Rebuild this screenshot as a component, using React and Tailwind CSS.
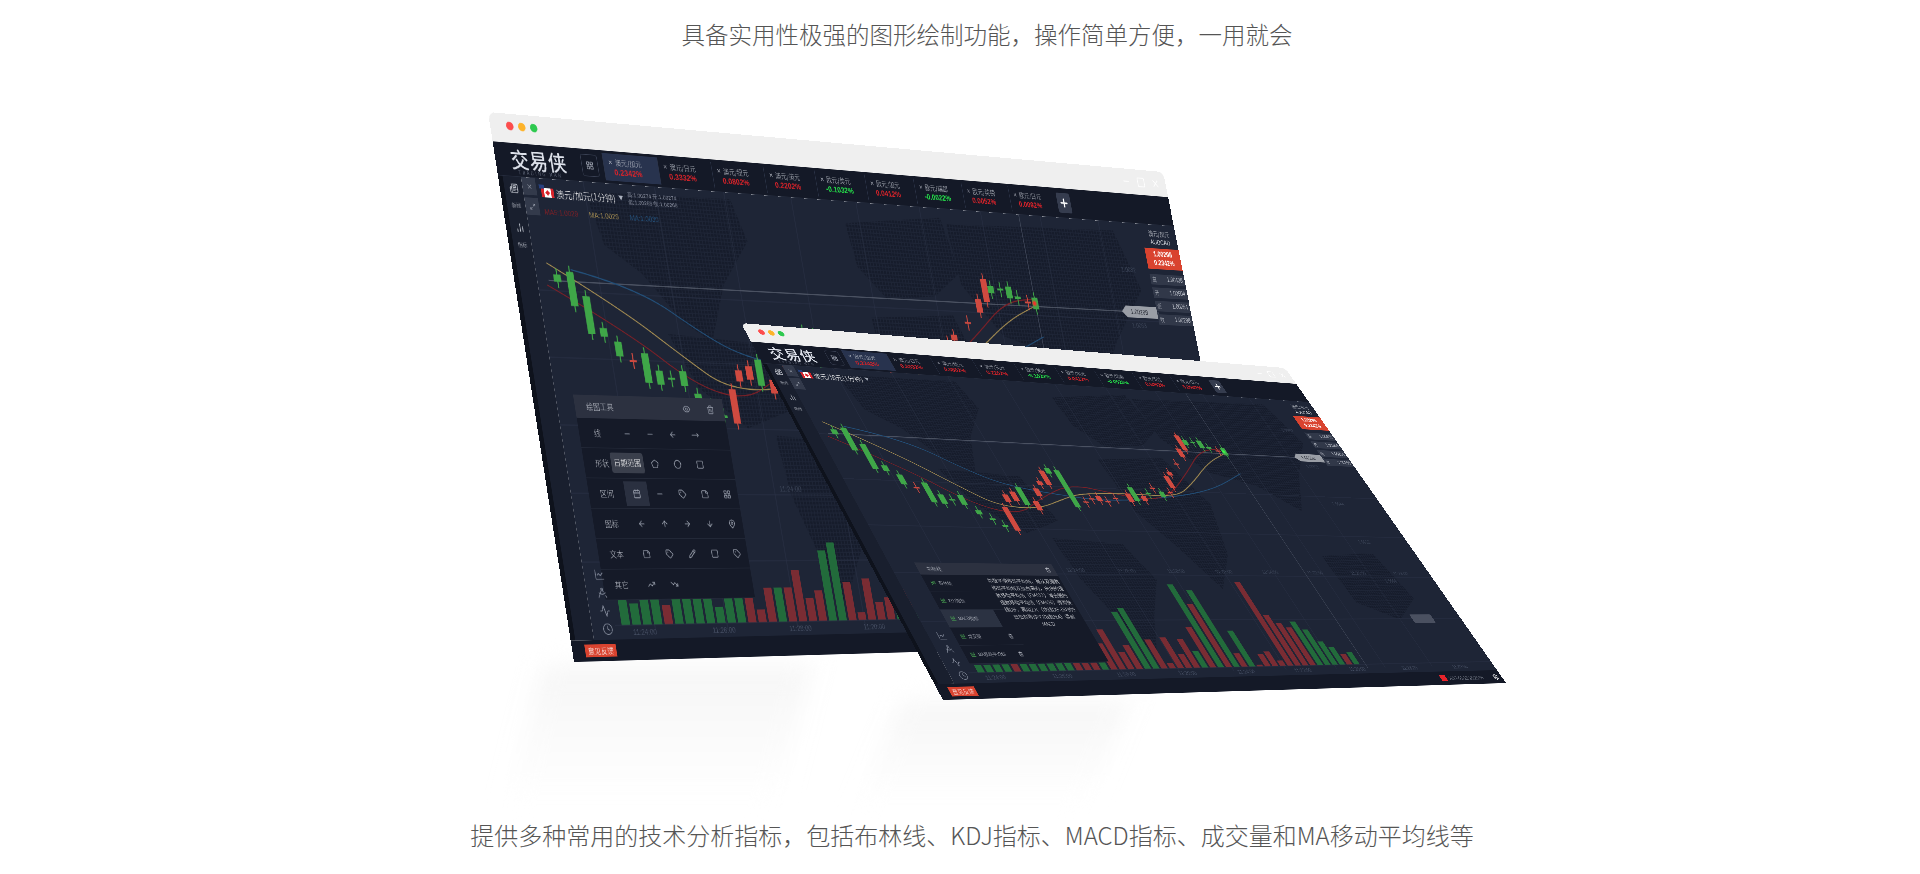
import { useMemo } from "react";
import {
  Activity, ArrowDown, ArrowLeft, ArrowRight, ArrowUp, Calendar, ChartCandlestick, ChartLine, ChartNoAxesColumn, Circle, Clock,
  DraftingCompass, Eye, LayoutGrid, MapPin, Maximize2, Minus, MoveRight, Newspaper, Pencil, Pentagon,
  Plus, Settings, Square, StickyNote, Tag, Trash2, TrendingDown, TrendingUp, X,
} from "lucide-react";

const W = 1366;
const H = 800;

// x, mid y, body length, colour
const CANDLES = [
  [76, 210, 11, "g"], [101, 225, 51, "g"], [125, 263, 56, "g"], [148, 288, 13, "g"], [172, 312, 22, "g"],
  [196, 329, 2, "r"], [220, 339, 44, "g"], [243, 353, 21, "g"], [265, 354, 3, "g"], [289, 353, 22, "g"],
  [312, 380, 9, "g"], [336, 395, 4, "g"], [357, 409, 4, "g"], [382, 393, 52, "r"], [401, 346, 17, "r"],
  [423, 341, 21, "r"], [444, 340, 40, "g"], [468, 361, 21, "r"], [488, 330, 18, "r"], [508, 308, 8, "r"],
  [530, 295, 34, "r"], [548, 278, 13, "g"], [570, 319, 86, "g"], [598, 349, 3, "r"], [618, 341, 3, "r"],
  [638, 340, 12, "r"], [657, 346, 2, "r"], [683, 338, 3, "r"], [722, 335, 20, "r"], [739, 326, 33, "g"],
  [761, 336, 12, "r"], [780, 323, 3, "g"], [801, 310, 3, "r"], [818, 324, 13, "g"], [843, 319, 3, "r"],
  [860, 293, 29, "r"], [876, 272, 9, "r"], [913, 247, 3, "r"], [946, 218, 22, "r"], [966, 192, 38, "r"],
  [980, 190, 12, "g"], [1002, 189, 3, "g"], [1021, 193, 19, "g"], [1039, 201, 4, "g"], [1061, 208, 3, "r"],
  [1078, 209, 19, "g"],
];

const MA_TAN = [[60, 188], [186, 250], [302, 324], [369, 364], [467, 368], [539, 345], [596, 329], [727, 325], [853, 329], [918, 297], [1007, 240], [1077, 213]];
const MA_RED = [[55, 221], [192, 285], [313, 364], [410, 383], [481, 346], [581, 308], [671, 323], [754, 339], [833, 329], [928, 267], [1007, 209], [1084, 201]];
const MA_BLUE = [[104, 196], [226, 218], [345, 286], [418, 316], [536, 334], [657, 346], [853, 329], [976, 306], [1083, 264]];

const VOL_A = [
  [39, "g"], [31, "g"], [39, "g"], [39, "g"], [28, "r"], [40, "g"], [40, "g"], [40, "g"], [40, "g"], [24, "g"],
  [41, "g"], [41, "g"], [39, "r"], [19, "r"], [51, "r"], [51, "g"], [51, "r"], [77, "r"], [35, "r"], [46, "r"],
  [106, "g"], [118, "g"], [58, "r"], [12, "r"], [63, "r"], [27, "r"], [34, "r"], [20, "g"], [50, "r"], [30, "g"],
  [60, "r"], [24, "r"],
];
const VOL_B = [
  [15, "g"], [15, "g"], [15, "g"], [15, "g"], [15, "r"], [15, "g"], [15, "g"], [15, "g"], [15, "g"], [15, "g"],
  [15, "g"], [15, "r"], [15, "r"], [15, "r"], [15, "g"], [54, "r"], [83, "r"], [36, "r"], [50, "r"], [119, "g"],
  [128, "g"], [61, "r"], [11, "r"], [65, "r"], [30, "r"], [61, "r"], [35, "g"], [86, "r"], [180, "g"], [137, "r"],
  [167, "g"], [29, "r"], [78, "g"], [4, "r"], [27, "r"], [32, "r"], [12, "r"], [187, "r"], [112, "r"], [94, "r"],
  [84, "r"], [97, "g"], [79, "g"], [52, "g"], [40, "g"], [23, "r"], [27, "g"],
];

const TABS = [
  ["澳元/加元", "0.2342", "r"], ["澳元/日元", "0.3332", "r"], ["澳元/纽元", "0.0802", "r"],
  ["澳元/英元", "0.2202", "r"], ["欧元/美元", "-0.1032", "g"], ["欧元/加元", "0.0412", "r"],
  ["欧元/瑞郎", "-0.0022", "g"], ["欧元/英镑", "0.0052", "r"], ["欧元/日元", "0.0092", "r"],
];

const LAND = [
  "M150 110 L420 105 L440 170 L380 240 L340 330 L290 300 L230 230 L170 190 Z",
  "M260 320 L440 330 L470 430 L380 460 L300 400 Z",
  "M430 470 L590 480 L620 560 L560 640 L510 725 L470 640 L440 560 Z",
  "M640 130 L840 110 L860 200 L800 240 L700 250 L650 200 Z",
  "M660 280 L830 270 L880 380 L840 500 L770 580 L720 480 L670 400 Z",
  "M850 120 L1220 110 L1260 210 L1180 300 L1120 390 L1040 330 L930 300 L860 220 Z",
  "M1090 500 L1240 490 L1270 600 L1190 650 L1100 610 Z",
];

// the candle x values were read a little wide, pull them in towards the first one
const fx = (x) => 76 + (x - 76) * 0.935;

// maps the flat window onto its four corners on the page
function quadMatrix(w, h, [p0, p1, p2, p3]) {
  const dx1 = p1[0] - p2[0];
  const dx2 = p3[0] - p2[0];
  const sx = p0[0] - p1[0] + p2[0] - p3[0];
  const dy1 = p1[1] - p2[1];
  const dy2 = p3[1] - p2[1];
  const sy = p0[1] - p1[1] + p2[1] - p3[1];
  const den = dx1 * dy2 - dx2 * dy1;
  const g = (sx * dy2 - dx2 * sy) / den;
  const k = (dx1 * sy - sx * dy1) / den;
  const a = p1[0] - p0[0] + g * p1[0];
  const b = p3[0] - p0[0] + k * p3[0];
  const d = p1[1] - p0[1] + g * p1[1];
  const e = p3[1] - p0[1] + k * p3[1];
  return `matrix3d(${a / w},${d / w},0,${g / w},${b / h},${e / h},0,${k / h},0,0,1,0,${p0[0]},${p0[1]},0,1)`;
}

function smooth(pts, dy) {
  let d = `M${fx(pts[0][0])} ${pts[0][1] + dy}`;
  for (let i = 1; i < pts.length - 1; i++) {
    const mx = (fx(pts[i][0]) + fx(pts[i + 1][0])) / 2;
    const my = (pts[i][1] + pts[i + 1][1]) / 2 + dy;
    d += ` Q${fx(pts[i][0])} ${pts[i][1] + dy} ${mx} ${my}`;
  }
  const last = pts[pts.length - 1];
  return `${d} L${fx(last[0])} ${last[1] + dy}`;
}

function Chart({ shift, volBase, sepY, vols, volStart, volStep, barW, glow, times, volTag }) {
  const lineY = 214 + shift;
  return (
    <svg viewBox="40 95 1326 675" preserveAspectRatio="none" className="absolute inset-0 h-full w-full">
      <defs>
        <pattern id={`dots${shift}`} width="6" height="6" patternUnits="userSpaceOnUse">
          <rect width="4.5" height="4.5" fill="#161c2b" />
        </pattern>
      </defs>
      {LAND.map((d, i) => (
        <path key={i} d={d} fill={`url(#dots${shift})`} />
      ))}
      {[150, 280, 410, 540, 670, 800, 930, 1060, 1190].map((x) => (
        <line key={x} x1={x} x2={x} y1="95" y2={volBase + 8} stroke="#2b3347" strokeWidth="1" />
      ))}
      {[-3, -2, -1, 0, 1].map((k) => (
        <line key={k} x1="40" x2="1366" y1={sepY + k * 99} y2={sepY + k * 99} stroke="#2b3347" strokeWidth="1" />
      ))}
      <line x1={fx(1078)} x2={fx(1078)} y1="95" y2={volBase + 8} stroke="#4a5163" strokeWidth="1.2" />
      <line x1="60" x2="1290" y1={lineY} y2={lineY} stroke="#5a6070" strokeWidth="1.6" />
      {[0, 1, 2, 3, 4].map((i) => (
        <text key={i} x="1222" y={146 + i * 95 + shift} fill="#3c4558" fontSize="11" fontFamily="Liberation Sans, sans-serif">
          {["1.0082", "1.0063", "1.0044", "1.0025", "1.0006"][i]}
        </text>
      ))}
      <path d={smooth(MA_BLUE, shift)} fill="none" stroke="#23507a" strokeWidth="1.8" />
      <path d={smooth(MA_RED, shift)} fill="none" stroke="#7d2027" strokeWidth="1.8" />
      <path d={smooth(MA_TAN, shift)} fill="none" stroke="#a58d52" strokeWidth="1.8" />
      {CANDLES.map(([x, y, len, c]) => {
        const col = c === "g" ? "#3fa648" : "#cf4a40";
        const wick = len / 2 + (len < 6 ? 11 : 9);
        return (
          <g key={x}>
            <line x1={fx(x)} x2={fx(x)} y1={y + shift - wick} y2={y + shift + wick} stroke={col} strokeWidth="2" />
            <rect x={fx(x) - 6.5} y={y + shift - len / 2} width="13" height={Math.max(len, 3)} fill={col} />
          </g>
        );
      })}
      <circle cx={fx(1076)} cy={209 + shift} r="4" fill={glow} className="blur-[1.5px]" />
      {times.map((t, i) => (
        <text key={t + i} x={420 + i * 120} y={sepY - 5} fill="#3c4558" fontSize="11" fontFamily="Liberation Sans, sans-serif">
          {t}
        </text>
      ))}
      {vols.map(([h, c], i) => (
        <rect
          key={i}
          x={volStart + i * volStep}
          y={volBase - h}
          width={barW}
          height={h}
          fill={c === "g" ? "#226b3b" : "#7a2c33"}
        />
      ))}
      <line x1="80" x2="1366" y1={volBase} y2={volBase} stroke="#2b3347" strokeWidth="1" />
      {times.map((t, i) => (
        <text key={t + i} x={110 + i * 142} y={volBase + 14} fill="#454e62" fontSize="11" fontFamily="Liberation Sans, sans-serif">
          {t}
        </text>
      ))}
      <polygon points={`1205,${lineY} 1216,${lineY - 10} 1286,${lineY - 10} 1286,${lineY + 10} 1216,${lineY + 10}`} fill="#9a9ea6" />
      <text x="1225" y={lineY + 4} fill="#20242e" fontSize="11" fontFamily="Liberation Sans, sans-serif">1.00298</text>
      {volTag && <rect x="1225" y={sepY + 89} width="60" height="20" rx="3" fill="#4a5060" />}
    </svg>
  );
}

function Flag() {
  return (
    <span className="relative mr-1 inline-flex h-[14px] w-[22px] items-center justify-center bg-white">
      <span className="absolute inset-y-0 left-0 w-[5px] bg-[#d8232a]" />
      <span className="absolute inset-y-0 right-0 w-[5px] bg-[#d8232a]" />
      <span className="h-[6px] w-[6px] rotate-45 bg-[#d8232a]" />
      <span className="absolute -top-[5px] -left-[3px] h-[6px] w-[9px] bg-[#26407e]" />
    </span>
  );
}

function Header() {
  return (
    <div className="flex h-[51px] items-center border-b border-[#242b3c] bg-[#141927] pl-[22px]">
      <div className="mt-[4px] flex w-[108px] flex-col items-center text-[#dde1ea]">
        <span className="text-[32px] leading-[34px] font-medium tracking-[1px]">交易侠</span>
        <span className="text-[7px] leading-[8px] tracking-[3px] text-[#7d8598]">TRADING MAN</span>
      </div>
      <div className="ml-[22px] flex h-[34px] w-[30px] items-center justify-center rounded-sm border border-[#3b4255]">
        <LayoutGrid size={14} className="text-[#aab0bd]" />
      </div>
      <div className="ml-[10px] flex">
        {TABS.map(([name, val, c], i) => (
          <div key={name} className={`flex h-[42px] w-[101px] flex-col justify-center border-l border-[#2b3347] pl-[8px] ${i === 0 ? "bg-[#28334e]" : ""}`}>
            <span className="flex items-center gap-1 text-[11px] leading-[15px] text-[#c3c7d0]">
              <X size={9} /> {name}
            </span>
            <span className={`pl-[9px] font-['Liberation_Sans',sans-serif] text-[13px] leading-[15px] font-bold ${c === "g" ? "text-[#25e04a]" : "text-[#d8232a]"}`}>
              {val}%
            </span>
          </div>
        ))}
      </div>
      <div className="ml-[4px] flex h-[34px] w-[30px] items-center justify-center rounded-sm bg-[#353c4e]">
        <Plus size={22} strokeWidth={3} className="text-white" />
      </div>
    </div>
  );
}

function RightPanel() {
  const rows = [["高", "1.00438"], ["开", "1.00504"], ["低", "1.00254"], ["收", "1.00298"]];
  return (
    <div className="absolute top-[8px] right-0 flex w-[80px] flex-col items-center text-[#d5d8de]">
      <span className="text-[11px] leading-[15px]">澳元/加元</span>
      <span className="font-['Liberation_Sans',sans-serif] text-[11px] leading-[15px]">AUDCAD</span>
      <div className="mt-[3px] flex h-[36px] w-full flex-col items-center justify-center bg-[#d9432f] font-['Liberation_Sans',sans-serif] text-[12px] leading-[15px] font-bold text-white">
        <span>1.00298</span>
        <span>0.2342%</span>
      </div>
      <div className="mt-[9px] flex w-full flex-col gap-[5px]">
        {rows.map(([k, v]) => (
          <div key={k} className="flex h-[18px] items-center justify-between bg-[#313849] pr-[5px] pl-[4px] text-[10px] text-[#c3c7d0]">
            <span>{k}</span>
            <span className="font-['Liberation_Sans',sans-serif]">{v}</span>
          </div>
        ))}
      </div>
    </div>
  );
}

function SubHeader({ info }) {
  return (
    <div className="absolute top-0 left-0 flex">
      <div className="flex flex-col gap-[4px]">
        <div className="flex h-[26px] w-[24px] items-center justify-center bg-[#333a4b] text-[#9aa0ad]">
          <X size={11} />
        </div>
        <div className="flex h-[26px] w-[24px] items-center justify-center bg-[#333a4b] text-[#9aa0ad]">
          <Maximize2 size={11} />
        </div>
      </div>
      <div className="ml-[8px] pt-[3px]">
        <div className="flex items-center">
          <Flag />
          <span className="text-[14px] leading-[20px] text-white">澳元/加元(1分钟)</span>
          <span className="ml-[6px] text-[9px] text-[#aab0bd]">▼</span>
          {info && (
            <span className="ml-[8px] font-['Liberation_Sans',sans-serif] text-[9px] leading-[11px] text-[#8a90a0]">
              高:1.00274 开:1.00274
              <br />
              低:1.00265 收:1.00269
            </span>
          )}
        </div>
        {info && (
          <div className="mt-[4px] flex gap-[20px] font-['Liberation_Sans',sans-serif] text-[11px] leading-[14px]">
            <span className="text-[#7d2027]">MA5:1.0029</span>
            <span className="text-[#a58d52]">MA:1.0029</span>
            <span className="text-[#23507a]">MA:1.0030</span>
          </div>
        )}
      </div>
    </div>
  );
}

function SideTools() {
  const icons = [ChartLine, DraftingCompass, Activity, Clock];
  return (
    <div className="absolute bottom-[6px] left-[18px] flex flex-col gap-[8px] text-[#8a91a1]">
      {icons.map((Icon, i) => (
        <Icon key={i} size={18} strokeWidth={1.5} />
      ))}
    </div>
  );
}

function ToolIcon({ Icon, active }) {
  return (
    <div className={`flex h-[36px] items-center justify-center ${active ? "bg-[#2a3040]" : ""}`}>
      {Icon && <Icon size={14} className="text-[#9aa0ad]" />}
    </div>
  );
}

function DrawPanel() {
  const rows = [
    ["线", [Minus, Minus, ArrowLeft, MoveRight]],
    ["形状", [null, Pentagon, Circle, Square]],
    ["区间", [Calendar, Minus, Tag, StickyNote, LayoutGrid]],
    ["图标", [ArrowLeft, ArrowUp, ArrowRight, ArrowDown, MapPin]],
    ["文本", [StickyNote, Tag, Pencil, Square, Tag]],
    ["其它", [TrendingUp, TrendingDown]],
  ];
  return (
    <div className="absolute top-[321px] left-[31px] w-[269px] bg-[#151a28] text-[#c3c7d0]">
      <div className="flex h-[34px] items-center justify-between bg-[#2c3140] pr-[18px] pl-[20px] text-[12px]">
        <span>绘图工具</span>
        <span className="flex gap-[30px] text-[#8d93a1]">
          <Eye size={14} />
          <Trash2 size={14} />
        </span>
      </div>
      {rows.map(([label, icons], r) => (
        <div key={label} className="relative grid h-[44px] grid-cols-[64px_repeat(5,41px)] items-center border-b border-[#232938] text-[12px]">
          <span className="text-center">{label}</span>
          {icons.map((Icon, i) => (
            <ToolIcon key={i} Icon={Icon} active={r === 2 && i === 0} />
          ))}
          {r === 1 && (
            <span className="absolute top-[6px] left-[48px] flex h-[30px] w-[58px] items-center justify-center rounded-sm bg-[#3a3f4c] text-[12px] text-white">
              日期范围
            </span>
          )}
        </div>
      ))}
    </div>
  );
}

function IndicatorPanel() {
  const rows = ["布林线", "KDJ指标", "MACD指标", "成交量", "MA移动平均线"];
  return (
    <div className="absolute top-[433px] left-[53px] w-[300px] bg-[#151a28] text-[#c3c7d0]">
      <div className="flex h-[25px] items-center justify-between bg-[#2c3140] pr-[10px] pl-[20px] text-[10px]">
        <span>指标线</span>
        <Trash2 size={11} />
      </div>
      <div className="flex">
        <div className="w-[135px] shrink-0">
          {rows.map((t, i) => (
            <div key={t} className={`flex h-[36px] items-center gap-[5px] border-b border-[#232938] pl-[12px] text-[9px] ${i === 2 ? "w-[112px] bg-[#2b3242]" : ""}`}>
              <ChartCandlestick size={11} className="shrink-0 text-[#4aa552]" />
              <span className="whitespace-nowrap">{t}</span>
              {i > 2 && <Trash2 size={10} className="ml-auto mr-[12px] shrink-0" />}
            </div>
          ))}
        </div>
        <p className="w-[160px] pt-[4px] text-center text-[10.5px] leading-[15px] text-[#e6e8ec]">
          指数平滑移动平均线，是从双指数移动平均线发展而来的，由快的指数移动平均线（EMA12）减去慢的指数移动平均线（EMA26）得到快线DIF，再用2×（快线DIF-DIF的9日加权移动平均线DEA）得到MACD
        </p>
      </div>
    </div>
  );
}

function Window({ corners, shift, sepY, vols, volStart, volStep, barW, glow, times, info, panel, status }) {
  const transform = useMemo(() => quadMatrix(W, H, corners), [corners]);
  return (
    <div style={{ transform }} className="absolute top-0 left-0 flex h-[800px] w-[1366px] origin-top-left flex-col">
      <div className="flex h-[44px] shrink-0 items-start gap-[8px] rounded-t-xl bg-[#efefef] pt-[12px] pr-[14px] pl-[28px]">
        <span className="h-[13px] w-[13px] rounded-full bg-[#fc4d4d]" />
        <span className="h-[13px] w-[13px] rounded-full bg-[#fdb32a]" />
        <span className="h-[13px] w-[13px] rounded-full bg-[#2ec94f]" />
        <span className="ml-auto flex gap-[14px] text-white">
          <Minus size={20} />
          <Square size={20} />
          <X size={20} />
        </span>
      </div>
      <Header />
      <div className="flex min-h-0 flex-1">
        <div className="flex w-[40px] shrink-0 flex-col items-center gap-[8px] border-l-[8px] border-[#0e121c] bg-[#191f2e] pt-[10px] text-[8px] text-[#c3c7d0]">
          <span className="flex flex-col items-center">
            <Newspaper size={15} />
            新闻
          </span>
          <span className="flex flex-col items-center">
            <ChartNoAxesColumn size={15} />
            指标
          </span>
        </div>
        <div className="relative flex-1 overflow-hidden bg-[#1e2536]">
          <Chart
            shift={shift}
            volBase={750}
            sepY={sepY}
            vols={vols}
            volStart={volStart}
            volStep={volStep}
            barW={barW}
            glow={glow}
            times={times}
            volTag={status}
          />
          <SubHeader info={info} />
          <RightPanel />
          {panel}
          <SideTools />
        </div>
      </div>
      <div className="flex h-[30px] shrink-0 items-center justify-between bg-[#141927] pr-[10px] pl-[22px] text-[11px]">
        <span className="flex h-[18px] w-[54px] items-center justify-center bg-[#d9432f] text-white">意见反馈</span>
        {status && (
          <span className="flex items-center gap-[6px] text-[#9aa0ad]">
            <span className="h-[14px] w-[16px] bg-[#e8232a]" />
            2017-02-13 16:23:08
            <Settings size={15} className="ml-[24px] text-white" />
          </span>
        )}
      </div>
    </div>
  );
}

const CORNERS_A = [[488, 112], [1163, 172], [1256, 642], [574, 662]];
const CORNERS_B = [[741, 323], [1285, 368], [1506, 683], [943, 700]];
const TIMES = ["11:24:00", "11:26:00", "11:28:00", "11:20:00", "11:24:00", "11:22:00", "11:26:00", "11:28:00", "11:30:00"];

export default function App() {
  return (
    <div className="relative flex h-[874px] w-full flex-col items-center justify-between overflow-hidden bg-white pt-[16px] pb-[21px] font-['Noto_Sans_CJK_SC',sans-serif] leading-[36px] font-light text-[#555555]">
      <div className="absolute top-[666px] left-[525px] h-[135px] w-[270px] -skew-x-[14deg] bg-gradient-to-b from-[#f6f6f6] to-white blur-md" />
      <div className="absolute top-[702px] left-[880px] h-[100px] w-[230px] -skew-x-[22deg] bg-gradient-to-b from-[#f6f6f6] to-white blur-md" />
      <Window
        corners={CORNERS_A}
        shift={34}
        sepY={560}
        vols={VOL_A}
        volStart={92}
        volStep={19}
        barW={15}
        glow="#ff2a2a"
        times={TIMES}
        info
        panel={<DrawPanel />}
      />
      <Window
        corners={CORNERS_B}
        shift={36}
        sepY={549}
        vols={VOL_B}
        volStart={100}
        volStep={19.2}
        barW={14.5}
        glow="#39ff4a"
        times={TIMES}
        status
        panel={<IndicatorPanel />}
      />
      <p className="relative ml-[54px] text-[23.5px]">具备实用性极强的图形绘制功能，操作简单方便，一用就会</p>
      <p className="relative ml-[24px] text-[24px]">提供多种常用的技术分析指标，包括布林线、KDJ指标、MACD指标、成交量和MA移动平均线等</p>
    </div>
  );
}
